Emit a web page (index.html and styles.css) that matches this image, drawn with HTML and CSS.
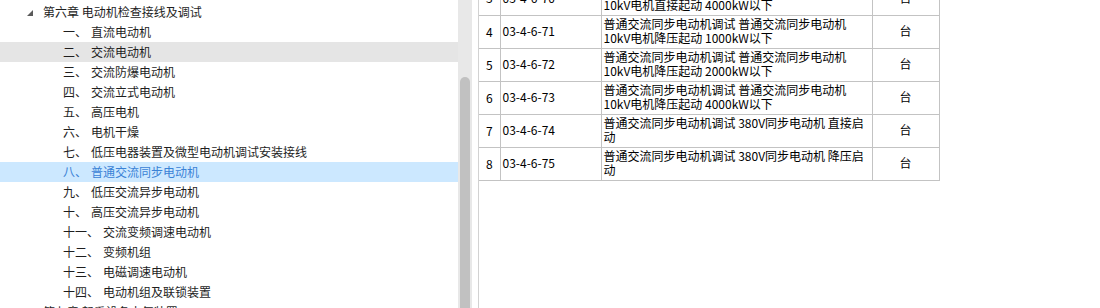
FILE: index.html
```html
<!DOCTYPE html>
<html lang="zh-CN">
<head>
<meta charset="utf-8">
<title>电动机检查接线及调试</title>
<link rel="stylesheet" href="styles.css">
</head>
<body>
<div class="app">
  <div class="tree">
    <div class="row chapter"><svg class="caret" width="6" height="6" viewBox="0 0 6 6"><polygon points="6,0 6,6 0,6" fill="#5a5a5a"/></svg><span>第六章 电动机检查接线及调试</span></div>
    <div class="row item"><span class="no">一、</span><span class="name">直流电动机</span></div>
    <div class="row item hover"><span class="no">二、</span><span class="name">交流电动机</span></div>
    <div class="row item"><span class="no">三、</span><span class="name">交流防爆电动机</span></div>
    <div class="row item"><span class="no">四、</span><span class="name">交流立式电动机</span></div>
    <div class="row item"><span class="no">五、</span><span class="name">高压电机</span></div>
    <div class="row item"><span class="no">六、</span><span class="name">电机干燥</span></div>
    <div class="row item"><span class="no">七、</span><span class="name">低压电器装置及微型电动机调试安装接线</span></div>
    <div class="row item selected"><span class="no">八、</span><span class="name">普通交流同步电动机</span></div>
    <div class="row item"><span class="no">九、</span><span class="name">低压交流异步电动机</span></div>
    <div class="row item"><span class="no">十、</span><span class="name">高压交流异步电动机</span></div>
    <div class="row item"><span class="no">十一、</span><span class="name">交流变频调速电动机</span></div>
    <div class="row item"><span class="no">十二、</span><span class="name">变频机组</span></div>
    <div class="row item"><span class="no">十三、</span><span class="name">电磁调速电动机</span></div>
    <div class="row item"><span class="no">十四、</span><span class="name">电动机组及联锁装置</span></div>
    <div class="row chapter next"><span>第七章 起重设备电气装置</span></div>
  </div>
  <div class="scrollbar"><div class="thumb"></div></div>
  <div class="gap"></div>
  <div class="grid">
    <table class="quota">
      <colgroup><col class="c1"><col class="c2"><col class="c3"><col class="c4"></colgroup>
      <tr><td class="num">3</td><td class="code">03-4-6-70</td><td class="desc">普通交流同步电动机调试 普通交流同步电动机<br>10kV电机直接起动 4000kW以下</td><td class="unit">台</td></tr>
      <tr><td class="num">4</td><td class="code">03-4-6-71</td><td class="desc">普通交流同步电动机调试 普通交流同步电动机<br>10kV电机降压起动 1000kW以下</td><td class="unit">台</td></tr>
      <tr><td class="num">5</td><td class="code">03-4-6-72</td><td class="desc">普通交流同步电动机调试 普通交流同步电动机<br>10kV电机降压起动 2000kW以下</td><td class="unit">台</td></tr>
      <tr><td class="num">6</td><td class="code">03-4-6-73</td><td class="desc">普通交流同步电动机调试 普通交流同步电动机<br>10kV电机降压起动 4000kW以下</td><td class="unit">台</td></tr>
      <tr><td class="num">7</td><td class="code">03-4-6-74</td><td class="desc">普通交流同步电动机调试 380V同步电动机 直接启<br>动</td><td class="unit">台</td></tr>
      <tr><td class="num">8</td><td class="code">03-4-6-75</td><td class="desc">普通交流同步电动机调试 380V同步电动机 降压启<br>动</td><td class="unit">台</td></tr>
    </table>
  </div>
</div>
</body>
</html>
```

FILE: styles.css
```css
* { box-sizing: border-box; }
html, body { margin: 0; padding: 0; background: #fff; }
body { width: 1100px; height: 308px; overflow: hidden; }

.app {
  display: flex;
  height: 308px;
  font-family: "Noto Sans CJK SC", "Noto Sans", sans-serif;
  font-size: 12px;
}

.tree {
  width: 458px;
  flex: none;
  padding-top: 2px;
  overflow: hidden;
  color: #1e1e1e;
}
.row {
  display: flex;
  align-items: center;
  height: 20px;
  line-height: 20px;
  white-space: nowrap;
}
.chapter { padding-left: 27px; }
.chapter .caret { margin: 2px 10px 0 0; flex: none; }
.chapter.next { padding-left: 43px; }
.item { padding-left: 63px; }
.item .name { margin-left: 4px; }
.hover { background: #e5e5e5; }
.selected { background: #cce8ff; color: #3a82d6; }

.scrollbar {
  width: 14px;
  flex: none;
  background: #e8e8e8;
  padding: 77px 2px 0;
}
.thumb {
  height: 100%;
  background: #c1c1c1;
  border-radius: 5px 5px 0 0;
}

.gap { width: 6px; flex: none; }

.grid {
  flex: 1;
  border-left: 1px solid #d2d2d2;
  overflow: hidden;
}

.quota {
  border-collapse: collapse;
  table-layout: fixed;
  width: 460px;
  margin-top: -18px;
  color: #000;
  font-size: 12px;
  line-height: 14px;
}
.quota col.c1 { width: 21px; }
.quota col.c2 { width: 101px; }
.quota col.c3 { width: 271px; }
.quota col.c4 { width: 67px; }
.quota td {
  border: 1px solid #c3c3c3;
  height: 33px;
  padding: 1px 2px 2px;
  vertical-align: middle;
  white-space: nowrap;
  overflow: hidden;
}
.quota tr:first-child td { border-top: none; }
.quota td:first-child { border-left: none; }
.quota td.num { text-align: center; padding: 0; }
.quota td.code { padding-left: 2px; }
.quota td.desc { padding-left: 2px; }
.quota td.unit { text-align: center; }
```
